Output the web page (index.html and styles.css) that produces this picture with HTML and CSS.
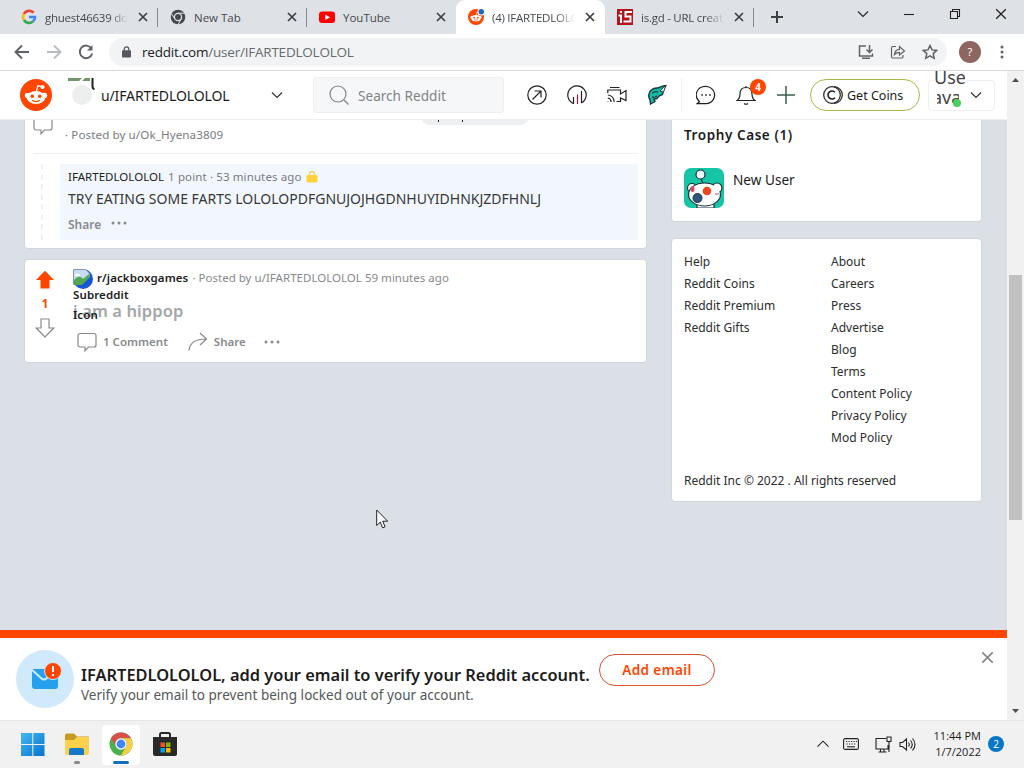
FILE: index.html
```html
<!DOCTYPE html>
<html lang="en">
<head>
  <meta charset="UTF-8">
  <title>(4) IFARTEDLOLOLOL - Reddit</title>
  <link rel="stylesheet" href="styles.css">
</head>
<body>

<!-- shared symbols -->
<svg class="defs" width="0" height="0">
  <symbol id="close" viewBox="0 0 10 10"><path d="M1 1l8 8M9 1l-8 8"/></symbol>
  <symbol id="down" viewBox="0 0 12 8"><path d="M1 1.500l5 5 5-5"/></symbol>
  <symbol id="bubble" viewBox="0 0 20 20"><path d="M3 1.500h14a2 2 0 0 1 2 2v9.500a2 2 0 0 1-2 2h-5.500L8 18.700V15H3a2 2 0 0 1-2-2V3.500a2 2 0 0 1 2-2z"/></symbol>
  <symbol id="dots" viewBox="0 0 16 4"><circle cx="2" cy="2" r="1.500"/><circle cx="8" cy="2" r="1.500"/><circle cx="14" cy="2" r="1.500"/></symbol>
  <symbol id="snoo" viewBox="0 0 32 32">
    <circle cx="16" cy="16" r="16" fill="#ff4500"/>
    <path d="M16.500 12l1.400-5.300 4.300 1" fill="none" stroke="#fff" stroke-width="1.300"/>
    <circle cx="22.500" cy="8" r="2.100" fill="#fff"/>
    <circle cx="7.500" cy="16.500" r="2.700" fill="#fff"/><circle cx="24.500" cy="16.500" r="2.700" fill="#fff"/>
    <ellipse cx="16" cy="18.500" rx="9.300" ry="6.500" fill="#fff"/>
    <circle cx="12.300" cy="17.300" r="1.800" fill="#ff4500"/><circle cx="19.700" cy="17.300" r="1.800" fill="#ff4500"/>
    <path d="M12 21.300q4 2.500 8 0" fill="none" stroke="#ff4500" stroke-width="1.200"/>
  </symbol>
  <symbol id="chrome" viewBox="0 0 24 24">
    <circle cx="12" cy="12" r="11.500" fill="#4caf50"/>
    <path d="M2 6.300A11.500 11.500 0 0 1 22 6.300H12a5.700 5.700 0 0 0-5 8.500z" fill="#d9504a"/>
    <path d="M22 6.300A11.500 11.500 0 0 1 12 23.500l5-8.700a5.700 5.700 0 0 0-5-8.500z" fill="#f8ce46"/>
    <circle cx="12" cy="12" r="5.700" fill="#fff"/><circle cx="12" cy="12" r="4.400" fill="#4285f4"/>
  </symbol>
</svg>

<div class="tabs">
  <div class="tab">
    <svg class="favicon" viewBox="0 0 16 16" fill="none" stroke-width="2.600"><path d="M12.600 3.700A6 6 0 0 0 2.900 5" stroke="#ea4335"/><path d="M2.900 5a6 6 0 0 0 0 6" stroke="#fbbc05"/><path d="M2.900 11a6 6 0 0 0 9 1.600" stroke="#34a853"/><path d="M8 8h6a6 6 0 0 1-2.100 4.600" stroke="#4285f4"/></svg>
    <span class="tab-title fade">ghuest46639 do</span>
    <svg class="tab-close"><use href="#close"/></svg>
  </div>
  <div class="tab">
    <svg class="favicon" viewBox="0 0 16 16"><circle cx="8" cy="8" r="7.300" fill="#44484d"/><circle cx="8" cy="8" r="3.600" fill="#44484d" stroke="#dee1e6" stroke-width="1.300"/><path d="M8 4.200h7M4.800 10L1.400 4.500M11.300 10l-3.600 6" stroke="#dee1e6"/></svg>
    <span class="tab-title">New Tab</span>
    <svg class="tab-close"><use href="#close"/></svg>
  </div>
  <div class="tab no-line">
    <svg class="favicon" viewBox="0 0 16 16"><rect y="2.500" width="16" height="11.500" rx="3" fill="#f00"/><path d="M6.300 5.500v5.500L11 8.200z" fill="#fff"/></svg>
    <span class="tab-title">YouTube</span>
    <svg class="tab-close"><use href="#close"/></svg>
  </div>
  <div class="tab active">
    <svg class="favicon" viewBox="0 0 32 32"><use href="#snoo"/><circle cx="26" cy="6" r="7" fill="#fff"/><circle cx="26.500" cy="5.500" r="5.500" fill="#1a66b8"/></svg>
    <span class="tab-title fade">(4) IFARTEDLOLO</span>
    <svg class="tab-close"><use href="#close"/></svg>
  </div>
  <div class="tab">
    <svg class="favicon" viewBox="0 0 16 16"><path fill="#b5121b" d="M0 0h16v16H0z"/><path d="M4 2v2M1.500 6.500H4V14M15 3H8.500v4.500h5v5H6.500" fill="none" stroke="#fff" stroke-width="2"/></svg>
    <span class="tab-title fade">is.gd - URL creat</span>
    <svg class="tab-close"><use href="#close"/></svg>
  </div>
  <svg class="new-tab" viewBox="0 0 12 12"><path d="M6 0v12M0 6h12"/></svg>
  <div class="window-buttons">
    <svg width="12" height="8"><use href="#down"/></svg>
    <svg width="12" height="10" viewBox="0 0 12 10"><path d="M1 5.500h10"/></svg>
    <svg width="12" height="12" viewBox="0 0 12 12"><path d="M1.500 3.500h7v7h-7zM3.500 3V1.500h7v7H9"/></svg>
    <svg width="12" height="12"><use href="#close"/></svg>
  </div>
</div>

<div class="toolbar">
  <svg class="nav" viewBox="0 0 16 16"><path d="M15 8H2M8 1.500L1.500 8 8 14.500"/></svg>
  <svg class="nav off" viewBox="0 0 16 16"><path d="M1 8h13M8 1.500L14.500 8 8 14.500"/></svg>
  <svg class="nav" viewBox="0 0 16 16"><path d="M13.300 4.300A6.300 6.300 0 1 0 14.200 9.500"/><path d="M14.500 1v5.500H9z" fill="#5f6368" stroke="none"/></svg>
  <div class="address">
    <svg class="lock" viewBox="0 0 10 13"><rect y="4.500" width="10" height="8" rx="1" fill="#55585c"/><path d="M2.500 5V3.300a2.500 2.500 0 0 1 5 0V5" fill="none" stroke="#55585c" stroke-width="1.400"/></svg>
    <span class="url">reddit.com<span>/user/IFARTEDLOLOLOL</span></span>
    <svg class="tool" viewBox="0 0 16 16"><path d="M8 2H1.500v10h13V9.500M4 14.300h8M11.500 1v7M8.500 5.500l3 3 3-3"/></svg>
    <svg class="tool" viewBox="0 0 16 16"><path d="M6 2.500H3a1.500 1.500 0 0 0-1.500 1.500v8.500A1.500 1.500 0 0 0 3 14h8.500a1.500 1.500 0 0 0 1.500-1.500V11M4.500 10.500q.5-5 5-5.200V2.500L14.500 7l-5 4V8.300q-3 0-5 2.200z" stroke-width="1.200"/></svg>
    <svg class="tool" viewBox="0 0 16 16"><path d="M8 1.500l2 4.400 4.700.5-3.500 3.200 1 4.700L8 11.900l-4.200 2.400 1-4.700L1.300 6.400 6 5.900z"/></svg>
  </div>
  <div class="profile">?</div>
  <svg class="kebab" viewBox="0 0 4 14"><circle cx="2" cy="2" r="1.500"/><circle cx="2" cy="7" r="1.500"/><circle cx="2" cy="12" r="1.500"/></svg>
</div>

<div class="viewport">
  <div class="page">
    <header class="header">
      <svg class="logo"><use href="#snoo"/></svg>
      <div class="community">
        <svg class="community-icon" viewBox="0 0 28 32"><circle cx="14" cy="20" r="10" fill="#edefef"/><path d="M0 3h14l-3 3H0zM14 6l3-3h5v3z" fill="#71966a"/><path d="M24.500 3v8q0 3 2 3" fill="none" stroke="#222" stroke-width="2"/></svg>
        <span>u/IFARTEDLOLOLOL</span>
        <svg class="caret"><use href="#down"/></svg>
      </div>
      <div class="search">
        <svg viewBox="0 0 20 20"><circle cx="9" cy="9" r="8"/><path d="M15 15l4.500 4.500"/></svg>
        <span>Search Reddit</span>
      </div>
      <div class="header-icons">
        <svg viewBox="0 0 20 20"><circle cx="10" cy="10" r="9.200"/><path d="M5.500 14.500l8.500-8.500M7.500 6H14v6.500"/></svg>
        <svg viewBox="0 0 20 20"><path d="M6.500 18.500a9.200 9.200 0 1 1 8-.5"/><path d="M6.500 12v7M14.500 6v12"/><path d="M10.500 9.500V19" stroke="#a3143c"/></svg>
        <svg viewBox="0 0 20 20"><path d="M3 2.500h9.500M.8 8V5h12.700v4L19 5.500v10L13.500 13v3.500H9.500M.8 10q6 .5 6.400 7M.8 13q3 .5 3.400 4M1 16.500v.5"/></svg>
        <svg viewBox="0 0 20 20"><path d="M3.500 19l-.5-4Q.5 11 3 6.500 6 2.500 11 3l2-.8L19 0l-2.500 5.500-1 4-3.500 1.500-2 2.500-3 .5 1 2.500z" fill="#16b8a5" stroke="#153b3c" stroke-width="1.400"/><path d="M13 6l6-6-2.500 7z" fill="#e2eef0" stroke-width=".8"/><path d="M5 8q3-2 6-1M5 12q3 1 5-1" stroke-width="1"/></svg>
      </div>
      <div class="header-actions">
        <svg viewBox="0 0 20 20"><path d="M3.500 16.700A9.200 8.700 0 1 1 10 18.700H1z"/><path d="M5.300 10h1.600M9.200 10h1.600M13.100 10h1.600" stroke-width="1.700"/></svg>
        <div class="bell">
          <svg viewBox="0 0 20 20"><path d="M1 15.500q3-2 3-6.500 0-6.500 6-6.500T16 9q0 4.500 3 6.500zM10 2.500V1M8 18.500q2 1.500 4 0"/></svg>
          <span>4</span>
        </div>
        <svg class="plus" viewBox="0 0 20 20"><path d="M10 1v18M1 10h18"/></svg>
      </div>
      <div class="coins">
        <svg viewBox="0 0 20 20"><circle cx="9" cy="10" r="8.300"/><path d="M11 1.700a8.300 8.300 0 0 1 0 16.600"/><path d="M12 7.300a4 4 0 1 0 0 5.400" stroke-width="1.600"/></svg>
        <span>Get Coins</span>
      </div>
      <div class="user-menu">
        <div class="avatar"><span>User</span><span class="second">avatar</span></div>
        <i class="online"></i>
        <svg class="caret"><use href="#down"/></svg>
      </div>
    </header>

    <div class="content">
      <main>
        <article class="card comment-card">
          <div class="comment-head">
            <svg class="line-icon"><use href="#bubble"/></svg>
            <span>· Posted by u/Ok_Hyena3809</span>
            <i class="flair"></i>
          </div>
          <div class="thread">
            <div class="comment">
              <p class="meta"><b>IFARTEDLOLOLOL</b> <span>1 point · 53 minutes ago</span>
                <svg viewBox="0 0 12 13"><path d="M3.500 6V4a2.500 2.500 0 0 1 5 0v2" fill="none" stroke="#f8d45c" stroke-width="1.500"/><rect x=".5" y="5" width="11" height="7.500" rx="1.500" fill="#ffd23b"/></svg>
              </p>
              <p class="text">TRY EATING SOME FARTS LOLOLOPDFGNUJOJHGDNHUYIDHNKJZDFHNLJ</p>
              <p class="share">Share <svg><use href="#dots"/></svg></p>
            </div>
          </div>
        </article>

        <article class="card post">
          <div class="votes">
            <svg viewBox="0 0 20 20"><path d="M10 .8L19 10h-4.500v8.500h-9V10H1z" fill="#ff4500"/></svg>
            <b>1</b>
            <svg viewBox="0 0 20 20"><path d="M10 19L1.200 10H6V1h8v9h4.800z" fill="none" stroke="#878a8c" stroke-width="1.200"/></svg>
          </div>
          <div class="post-body">
            <div class="post-meta">
              <div class="sub-icon">
                <svg viewBox="0 0 20 20"><circle cx="10" cy="10" r="10" fill="#1557d3"/><path d="M.5.5h12l4 4v11H.5z" fill="#c6dcf3" stroke="#8b98a4"/><path d="M1 16v-5q5-6 9-1l6-5v5L9 16z" fill="#4fa750"/><path d="M2 6q1-3 3-1 3 0 2 2H2z" fill="#fff"/><path d="M7 18L18 7q3 8-6 12z" fill="#1557d3"/></svg>
                <span class="alt">Subreddit<br>Icon</span>
              </div>
              <b>r/jackboxgames</b><span class="author">· Posted by u/IFARTEDLOLOLOL 59 minutes ago</span>
            </div>
            <h3>i am a hippop</h3>
            <div class="actions">
              <svg class="line-icon"><use href="#bubble"/></svg><span class="count">1 Comment</span>
              <svg class="line-icon" viewBox="0 0 20 20"><path d="M1 18.500Q2 7 18 7M12 1l6.500 6L12 13"/></svg><span class="share-label">Share</span>
              <svg class="more"><use href="#dots"/></svg>
            </div>
          </div>
        </article>
      </main>

      <aside>
        <section class="card trophies">
          <h4>Trophy Case (1)</h4>
          <div class="trophy">
            <svg viewBox="0 0 40 40"><rect width="40" height="40" rx="7" fill="#16c5a5"/><g stroke="#17333b" stroke-width="1.200"><path d="M17 10l2 6 4-1" fill="none"/><circle cx="16.500" cy="6.500" r="4.500" fill="#eef7ff"/><circle cx="8" cy="20" r="4.500" fill="#fff"/><circle cx="33" cy="20" r="5" fill="#fff"/><path d="M13 40v-5h17v5z" fill="#fff"/><ellipse cx="20.500" cy="26.500" rx="16" ry="11.500" fill="#fff"/></g><circle cx="33" cy="20" r="4" fill="#fff"/><circle cx="13.500" cy="30" r="4.500" fill="#31577e" stroke="#17333b"/><circle cx="23" cy="23" r="4.300" fill="#e7481d"/><ellipse cx="8.500" cy="21" rx="2" ry="3" fill="#d84461"/><path d="M31 26h4" stroke="#d84461"/></svg>
            <span>New User</span>
          </div>
        </section>
        <section class="card links">
          <ul>
            <li>Help</li><li>Reddit Coins</li><li>Reddit Premium</li><li>Reddit Gifts</li>
          </ul>
          <ul>
            <li>About</li><li>Careers</li><li>Press</li><li>Advertise</li><li>Blog</li><li>Terms</li><li>Content Policy</li><li>Privacy Policy</li><li>Mod Policy</li>
          </ul>
          <p>Reddit Inc © 2022 . All rights reserved</p>
        </section>
      </aside>
    </div>

    <div class="verify">
      <svg class="mail" viewBox="0 0 58 58"><circle cx="29" cy="29" r="29" fill="#d0eafb"/><path d="M16 19h26v17a3 3 0 0 1-3 3H19a3 3 0 0 1-3-3z" fill="#24a0ed"/><path d="M15 19l10 9q3 3 6 0l10-9" fill="none" stroke="#d0eafb" stroke-width="2"/><circle cx="37" cy="21" r="8.500" fill="#ff4500" stroke="#d0eafb" stroke-width="1"/><path d="M37 16v6M37 24v2" stroke="#fff" stroke-width="2"/></svg>
      <div class="verify-text">
        <b>IFARTEDLOLOLOL, add your email to verify your Reddit account.</b>
        <span>Verify your email to prevent being locked out of your account.</span>
      </div>
      <button>Add email</button>
      <svg class="dismiss"><use href="#close"/></svg>
    </div>
    <svg class="cursor" viewBox="0 0 12 20"><path d="M.7 1v15.500l3.600-3.400 2.300 5.700 2.500-1-2.400-5.600h5z" fill="#fff" stroke="#222"/></svg>
  </div>
  <div class="scrollbar">
    <svg viewBox="0 0 7 4"><path d="M0 4l3.500-4L7 4z"/></svg>
    <div class="thumb"></div>
    <svg viewBox="0 0 7 4"><path d="M0 0l3.500 4L7 0z"/></svg>
  </div>
</div>

<div class="taskbar">
  <div class="apps">
    <div class="app"><svg viewBox="0 0 24 24"><defs><linearGradient id="win" x2="1" y2="1"><stop stop-color="#43b9f1"/><stop offset="1" stop-color="#0873cf"/></linearGradient></defs><path d="M0 1h11.300v11H0zM12.300 1H23.500v11H12.300zM0 13h11.300v11H0zM12.300 13H23.500v11H12.300z" fill="url(#win)"/></svg></div>
    <div class="app running"><svg viewBox="0 0 24 24"><path d="M0 3.500a2 2 0 0 1 2-2h7l3 3h11a1 1 0 0 1 1 1V20H0z" fill="#c99a20"/><path d="M0 8h9l3-3h11a1 1 0 0 1 1 1v15a2 2 0 0 1-2 2H2a2 2 0 0 1-2-2z" fill="#fdd04b"/><path d="M4 23v-5a2 2 0 0 1 2-2h11a2 2 0 0 1 2 2v5z" fill="#1677c7"/></svg></div>
    <div class="app current"><svg><use href="#chrome"/></svg></div>
    <div class="app"><svg viewBox="0 0 24 24"><path d="M7 6V2.500A1.500 1.500 0 0 1 8.500 1h7A1.500 1.500 0 0 1 17 2.500V6" fill="none" stroke="#292929" stroke-width="2"/><path d="M0 5h24v17a2 2 0 0 1-2 2H2a2 2 0 0 1-2-2z" fill="#292929"/><path fill="#f25022" d="M7.500 10.500H12V15H7.500z"/><path fill="#7fba00" d="M13 10.500h4.500V15H13z"/><path fill="#00a4ef" d="M7.500 16H12v4.500H7.500z"/><path fill="#ffb900" d="M13 16h4.500v4.500H13z"/></svg></div>
  </div>
  <div class="tray">
    <svg class="up" viewBox="0 0 12 8"><path d="M.5 6.700L6 1.200l5.500 5.500"/></svg>
    <svg class="keys" viewBox="0 0 16 12"><rect x=".6" y=".6" width="14.800" height="10.800" rx="1.500"/><path d="M3 3.500h11M3.500 6h10" stroke-dasharray="1.200 1.300"/><path d="M4 8.800h8"/></svg>
    <svg class="net" viewBox="0 0 17 17"><path d="M11 2.500H1v10.500h12V9M5.500 13v3M3.500 16h8M9 13v3M12 1h4v4.500h-4zM14 5.500V16"/></svg>
    <svg class="sound" viewBox="0 0 17 15"><path d="M1 5.500h2.500L7.500 2v11L3.500 9.500H1zM9.500 5.500q1.500 2 0 4M11.500 3.500q3.500 4 0 8M13.500 1.500q5 6 0 12"/></svg>
    <div class="clock">11:44 PM<br>1/7/2022</div>
    <span class="notices">2</span>
  </div>
</div>

</body>
</html>
```

FILE: styles.css
```css
* {
  box-sizing: border-box;
}
body {
  margin: 0;
  width: 1024px;
  height: 768px;
  overflow: hidden;
  display: flex;
  flex-direction: column;
  font-family: "Noto Sans", sans-serif;
  color: #1c1c1c;
}
svg {
  flex: none;
  display: block;
}
.defs {
  position: absolute;
}
p, h3, h4, ul {
  margin: 0;
  padding: 0;
}

/* browser chrome */
.tabs {
  height: 34px;
  background: #dee1e6;
  display: flex;
  align-items: center;
  padding-left: 9px;
  font-family: "Open Sans", sans-serif;
  font-size: 11.5px;
  color: #45494d;
}
.tab {
  width: 149px;
  height: 34px;
  padding: 0 10px 0 12px;
  display: flex;
  align-items: center;
  position: relative;
}
.tab::after {
  content: "";
  position: absolute;
  right: 0;
  top: 8px;
  height: 19px;
  border-right: 1px solid #85898f;
}
.tab.no-line::after, .tab.active::after {
  display: none;
}
.tab.active {
  background: #fff;
  border-radius: 9px 9px 0 0;
}
.favicon {
  width: 16px;
  height: 16px;
  margin-right: 8px;
}
.tab-title {
  width: 83px;
  overflow: hidden;
  white-space: nowrap;
}
.fade {
  letter-spacing: -.25px;
  -webkit-mask-image: linear-gradient(to right, #000 78%, transparent);
}
.tab-close {
  width: 10px;
  height: 10px;
  margin-left: 10px;
  stroke: #3c4043;
  stroke-width: 1.7;
}
.new-tab {
  width: 12px;
  height: 12px;
  margin-left: 17px;
  stroke: #3c4043;
  stroke-width: 2;
}
.window-buttons {
  margin-left: auto;
  padding: 0 17px 6px 0;
  display: flex;
  align-items: center;
  gap: 34px;
  fill: none;
  stroke: #222;
  stroke-width: 1.1;
}
.toolbar {
  height: 37px;
  border-bottom: 1px solid #d7dadd;
  background: #fff;
  display: flex;
  align-items: center;
  padding: 0 20px 0 14px;
}
.nav {
  width: 16px;
  height: 16px;
  margin-right: 16px;
  fill: none;
  stroke: #5f6368;
  stroke-width: 1.9;
}
.nav.off {
  stroke: #b9bcbf;
}
.nav:nth-child(3) {
  margin-right: 15px;
}
.address {
  flex: 1;
  height: 28px;
  margin-right: 4px;
  padding: 0 9px 0 13px;
  border-radius: 14px;
  background: #f1f3f4;
  display: flex;
  align-items: center;
  gap: 16px;
}
.lock {
  width: 9px;
  height: 12px;
  margin-right: -5px;
}
.url {
  flex: 1;
  font: 13.5px "Open Sans", sans-serif;
  letter-spacing: -.22px;
  color: #202124;
}
.url span {
  color: #676b70;
}
.tool {
  width: 16px;
  height: 16px;
  fill: none;
  stroke: #5f6368;
  stroke-width: 1.5;
}
.profile {
  width: 22px;
  height: 22px;
  border-radius: 50%;
  background: #8d6660;
  color: #fff;
  text-align: center;
  font-size: 11px;
  line-height: 22px;
  margin: 0 19px 0 8px;
}
.kebab {
  width: 4px;
  height: 14px;
  fill: #5f6368;
}

/* reddit page */
.viewport {
  height: 649px;
  display: flex;
}
.page {
  width: 1007px;
  background: #dae0e6;
  position: relative;
  overflow: hidden;
  display: flex;
  flex-direction: column;
}
.header {
  position: relative;
  z-index: 1;
  height: 49px;
  background: #fff;
  border-bottom: 1px solid #edeff1;
  display: flex;
  align-items: center;
  padding-left: 20px;
}
.logo {
  width: 32px;
  height: 32px;
}
.community {
  width: 215px;
  height: 49px;
  margin-left: 16px;
  display: flex;
  align-items: center;
  font-size: 14px;
  letter-spacing: -.12px;
}
.community-icon {
  width: 28px;
  height: 32px;
  margin: 0 5px 8px 0;
}
.caret {
  width: 12px;
  height: 8px;
  fill: none;
  stroke: #333;
  stroke-width: 1.2;
}
.community .caret {
  margin-left: auto;
}
.search {
  width: 191px;
  height: 36px;
  margin-left: 30px;
  padding-left: 15px;
  border: 1px solid #edeff1;
  background: #f6f7f8;
  border-radius: 3px;
  display: flex;
  align-items: center;
  gap: 9px;
  font-size: 13.6px;
  color: #818487;
}
.search svg {
  width: 20px;
  height: 20px;
  fill: none;
  stroke: #818487;
  stroke-width: 1.2;
}
.header-icons, .header-actions {
  display: flex;
  align-items: center;
  gap: 20px;
  fill: none;
  stroke: #222;
  stroke-width: 1.2;
}
.header-icons svg, .header-actions svg {
  width: 20px;
  height: 20px;
}
.header-icons {
  padding-left: 23px;
}
.header-actions {
  height: 34px;
  margin-left: 14px;
  padding-left: 14px;
  border-left: 1px solid #edeff1;
}
.bell {
  position: relative;
}
.bell span {
  position: absolute;
  left: 14px;
  top: -6px;
  width: 16px;
  height: 16px;
  border-radius: 50%;
  background: #ff4500;
  color: #fff;
  font-size: 10px;
  font-weight: 700;
  line-height: 16px;
  text-align: center;
}
.plus {
  stroke: #3e5c4c;
  stroke-width: 1.5;
}
.coins {
  width: 110px;
  height: 32px;
  margin-left: 14px;
  padding-left: 12px;
  border: 1px solid #a8b94b;
  border-radius: 16px;
  display: flex;
  align-items: center;
  gap: 4px;
  font-size: 12.5px;
}
.coins svg {
  width: 20px;
  height: 20px;
  fill: none;
  stroke: #222;
  stroke-width: 1.2;
}
.user-menu {
  position: relative;
  width: 67px;
  height: 49px;
  margin-left: 8px;
  padding-left: 6px;
  display: flex;
  align-items: center;
}
.user-menu::before {
  content: "";
  position: absolute;
  inset: 9px 0 9px 0;
  border: 1px solid #edeff1;
  border-radius: 4px;
}
.avatar {
  width: 31px;
  height: 38px;
  margin-bottom: 12px;
  overflow: hidden;
  font-size: 18px;
  color: #444;
  background: #fff;
  position: relative;
}
.avatar span {
  display: block;
  line-height: 20px;
  margin-top: -3px;
}
.avatar .second {
  width: 22px;
  overflow: hidden;
  margin: 0 0 0 3px;
  text-indent: -5px;
}
.online {
  position: absolute;
  left: 25px;
  top: 28px;
  width: 8px;
  height: 8px;
  border-radius: 50%;
  background: #46d160;
}
.user-menu .caret {
  margin-left: 5px;
}

.content {
  height: 510px;
  display: flex;
  gap: 24px;
  padding-left: 24px;
}
main {
  width: 623px;
}
.card {
  background: #fff;
  border: 1px solid #d2d6dc;
  border-radius: 4px;
}
.comment-card {
  height: 129px;
  border-top: 0;
  border-radius: 0 0 4px 4px;
  margin-bottom: 10px;
}
.comment-head {
  height: 34px;
  margin: 0 8px;
  border-bottom: 1px solid #edeff1;
  display: flex;
  font-size: 11.6px;
  line-height: 16px;
  color: #787c7e;
  position: relative;
}
.comment-head span {
  padding: 7px 0 0 12px;
  letter-spacing: .1px;
}
.line-icon {
  width: 20px;
  height: 20px;
  fill: none;
  stroke: #878a8c;
  stroke-width: 1.2;
}
.comment-head .line-icon {
  margin-top: -5px;
}
.flair {
  position: absolute;
  left: 388px;
  top: -12px;
  width: 108px;
  height: 17px;
  border-radius: 9px;
  background: #edeff1;
}
.flair::before, .flair::after {
  content: "";
  position: absolute;
  left: 17px;
  bottom: 3px;
  width: 1px;
  height: 2px;
  background: #222;
}
.flair::after {
  left: 41px;
}
.thread {
  margin: 10px 8px 0 16px;
  border-left: 2px dashed #f0f1f3;
  padding-left: 17px;
}
.comment {
  height: 76px;
  padding: 3px 8px;
  background: #f2f7fe;
}
.meta {
  display: flex;
  align-items: center;
  gap: 4px;
  height: 18px;
  font-size: 11.5px;
  letter-spacing: .03px;
  color: #787c7e;
}
.meta span {
  letter-spacing: .12px;
}
.meta b {
  font-weight: 400;
  color: #1c1c1c;
}
.meta svg {
  width: 12px;
  height: 13px;
}
.text {
  font-size: 14px;
  line-height: 27px;
  white-space: nowrap;
  color: #36383a;
}
.share {
  display: flex;
  align-items: center;
  gap: 10px;
  font-size: 12px;
  font-weight: 600;
  line-height: 25px;
  color: #878a8c;
}
.share svg {
  width: 16px;
  height: 4px;
  margin-bottom: 4px;
  fill: #878a8c;
}
.post {
  height: 104px;
  display: flex;
}
.votes {
  width: 40px;
  padding-top: 10px;
  display: flex;
  flex-direction: column;
  align-items: center;
  font-size: 11.5px;
  line-height: 28px;
  color: #ff4500;
}
.votes svg {
  width: 20px;
  height: 20px;
}
.post-body {
  padding: 9px 0 0 8px;
}
.post-meta {
  display: flex;
  align-items: center;
  height: 20px;
  font-size: 11.5px;
  line-height: 16px;
}
.post-meta b {
  font-weight: 600;
  margin: 0 4px 2px;
  letter-spacing: .1px;
}
.author {
  color: #878a8c;
  letter-spacing: .02px;
  margin-bottom: 2px;
}
.sub-icon {
  position: relative;
  width: 20px;
  height: 20px;
}
.sub-icon svg {
  width: 20px;
  height: 20px;
}
.alt {
  position: absolute;
  left: 0;
  top: 16px;
  font-weight: 600;
  line-height: 20px;
  letter-spacing: .12px;
}
.post h3 {
  margin-top: 10px;
  font-size: 16.5px;
  font-weight: 600;
  line-height: 24px;
  letter-spacing: .1px;
  color: #a4a6a8;
}
.actions {
  display: flex;
  align-items: center;
  height: 37px;
  padding-left: 4px;
  font-size: 11.5px;
  font-weight: 600;
  color: #878a8c;
}
.count {
  margin: 0 20px 0 6px;
}
.share-label {
  margin: 0 18px 0 6px;
}
.more {
  width: 16px;
  height: 4px;
  fill: #878a8c;
}

aside {
  width: 311px;
}
.trophies {
  height: 102px;
  border-top: 0;
  border-radius: 0 0 4px 4px;
  padding: 5px 12px;
  margin-bottom: 16px;
}
.trophies h4 {
  font-size: 13.5px;
  font-weight: 600;
  line-height: 20px;
  letter-spacing: .58px;
}
.trophy {
  margin-top: 23px;
  display: flex;
  gap: 9px;
  font-size: 13.6px;
  line-height: 24px;
}
.trophy svg {
  width: 40px;
  height: 40px;
}
.links {
  height: 264px;
  padding: 12px 11px 11px 12px;
  display: grid;
  grid-template-columns: 147px 1fr;
  grid-template-rows: 219px 1fr;
  font-size: 12px;
  line-height: 22px;
  color: #2b2d2e;
}
.links li {
  list-style: none;
}
.links p {
  grid-column: 1 / 3;
}

.verify {
  height: 90px;
  border-top: 8px solid #ff4500;
  background: #fff;
  display: flex;
  align-items: flex-start;
  padding: 0 13px 0 16px;
}
.mail {
  width: 58px;
  height: 58px;
  margin: 12px 7px 0 0;
}
.verify-text {
  width: 511px;
  padding-top: 26px;
  white-space: nowrap;
}
.verify-text b, .verify-text span {
  display: block;
}
.verify-text b {
  font-size: 16.4px;
  font-weight: 600;
  line-height: 22px;
}
.verify-text span {
  font-size: 13.5px;
  line-height: 18px;
  letter-spacing: .03px;
  color: #555759;
}
.verify button {
  width: 116px;
  height: 32px;
  margin: 16px 0 0 7px;
  border: 1px solid #d8512c;
  border-radius: 16px;
  background: #fff;
  color: #ff4500;
  font: 600 13.5px "Noto Sans", sans-serif;
  letter-spacing: .4px;
}
.dismiss {
  width: 13px;
  height: 13px;
  margin: 13px 0 0 auto;
  stroke: #858789;
  stroke-width: 1.3;
}
.cursor {
  position: absolute;
  left: 376px;
  top: 438px;
  width: 12px;
  height: 20px;
}
.scrollbar {
  width: 17px;
  background: #f1f1f1;
  padding: 7px 1px;
  display: flex;
  flex-direction: column;
  align-items: center;
}
.scrollbar svg {
  width: 7px;
  height: 4px;
  fill: #505050;
}
.thumb {
  width: 13px;
  height: 245px;
  margin: 193px 0 auto;
  background: #c1c1c1;
}

/* taskbar */
.taskbar {
  height: 48px;
  background: #f1f1f1;
  border-top: 1px solid #e4e6e8;
  display: flex;
  justify-content: space-between;
  padding: 4px 20px 0 14px;
}
.apps {
  display: flex;
  gap: 6px;
}
.app {
  width: 38px;
  height: 40px;
  padding: 7px;
  border-radius: 4px;
  position: relative;
}
.app svg {
  width: 24px;
  height: 24px;
}
.app.current {
  background: #fff;
}
.app.running::after, .app.current::after {
  content: "";
  position: absolute;
  bottom: 1px;
  left: 16px;
  width: 6px;
  height: 3px;
  border-radius: 2px;
  background: #888;
}
.app.current::after {
  left: 11px;
  width: 16px;
  background: #0f6fbd;
}
.tray {
  display: flex;
  align-items: center;
  height: 38px;
  fill: none;
  stroke: #222;
  stroke-width: 1.1;
}
.up {
  width: 12px;
  height: 8px;
  margin-right: 14px;
}
.keys {
  width: 16px;
  height: 12px;
  margin-right: 16px;
}
.net {
  width: 17px;
  height: 17px;
  margin-right: 7px;
}
.sound {
  width: 17px;
  height: 15px;
}
.clock {
  width: 65px;
  text-align: right;
  font: 11px/16px "Open Sans", sans-serif;
}
.notices {
  width: 16px;
  height: 16px;
  margin-left: 7px;
  border-radius: 50%;
  background: #0876c8;
  color: #fff;
  text-align: center;
  font-size: 10px;
  line-height: 16px;
}
```
